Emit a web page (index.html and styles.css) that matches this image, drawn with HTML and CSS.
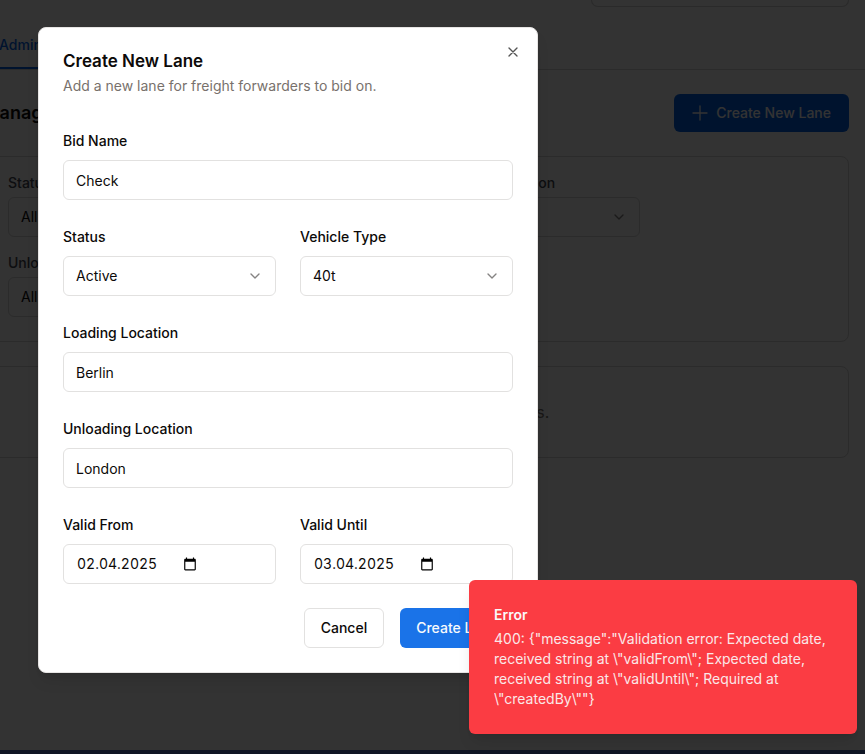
FILE: index.html
```html
<!DOCTYPE html>
<html lang="en">
<head>
<meta charset="utf-8">
<meta name="viewport" content="width=device-width, initial-scale=1">
<title>Manage Lanes</title>
<link rel="stylesheet" href="styles.css">
</head>
<body>
<div class="workspace">
  <main class="page">
    <div class="summary"></div>
    <nav class="tabs"><a class="tab" href="#admin">Admin</a></nav>
    <header class="page-head">
      <h1>Manage Lanes</h1>
      <button class="add" type="button">
        <svg width="16" height="16" viewBox="0 0 16 16" fill="none" stroke="currentColor" stroke-width="1.3" stroke-linecap="round"><path d="M8 1v14M1 8h14"/></svg>
        Create New Lane
      </button>
    </header>
    <section class="card filters">
      <div class="filter"><label for="f1">Status</label><div class="pick"><select id="f1"><option>All</option></select><svg class="chev" viewBox="0 0 24 24"><path d="m6 9 6 6 6-6"/></svg></div></div>
      <div class="filter"><label for="f2">Vehicle Type</label><div class="pick"><select id="f2"><option>All</option></select><svg class="chev" viewBox="0 0 24 24"><path d="m6 9 6 6 6-6"/></svg></div></div>
      <div class="filter"><label for="f3">Loading Location</label><div class="pick"><select id="f3"><option>All</option></select><svg class="chev" viewBox="0 0 24 24"><path d="m6 9 6 6 6-6"/></svg></div></div>
      <div class="filter"><label for="f4">Unloading Location</label><div class="pick"><select id="f4"><option>All</option></select><svg class="chev" viewBox="0 0 24 24"><path d="m6 9 6 6 6-6"/></svg></div></div>
    </section>
    <section class="card empty">No lanes match your current filters.</section>
  </main>
  <div class="overlay"></div>
</div>
<footer class="strip"></footer>

<div class="dialog" role="dialog" aria-labelledby="dialog-title">
  <button class="close" type="button" aria-label="Close"><svg width="16" height="16" viewBox="0 0 24 24" fill="none" stroke="currentColor" stroke-width="2" stroke-linecap="round"><path d="M18 6 6 18M6 6l12 12"/></svg></button>
  <div class="dialog-head">
    <h2 id="dialog-title">Create New Lane</h2>
    <p>Add a new lane for freight forwarders to bid on.</p>
  </div>
  <form class="form">
    <div class="field"><label for="name">Bid Name</label><input class="control" id="name" type="text" value="Check"></div>
    <div class="pair">
      <div class="field"><label for="status">Status</label><div class="pick"><select class="control" id="status"><option>Active</option></select><svg class="chev" viewBox="0 0 24 24"><path d="m6 9 6 6 6-6"/></svg></div></div>
      <div class="field"><label for="vehicle">Vehicle Type</label><div class="pick"><select class="control" id="vehicle"><option>40t</option></select><svg class="chev" viewBox="0 0 24 24"><path d="m6 9 6 6 6-6"/></svg></div></div>
    </div>
    <div class="field"><label for="loading">Loading Location</label><input class="control" id="loading" type="text" value="Berlin"></div>
    <div class="field"><label for="unloading">Unloading Location</label><input class="control" id="unloading" type="text" value="London"></div>
    <div class="pair">
      <div class="field"><label for="from">Valid From</label><div class="control date"><input id="from" type="text" value="02.04.2025"><svg width="14" height="14" viewBox="0 0 24 24"><path d="M20 3h-1V1h-2v2H7V1H5v2H4c-1.100 0-2 .9-2 2v16c0 1.100.9 2 2 2h16c1.100 0 2-.9 2-2V5c0-1.100-.9-2-2-2zm0 18H4V8h16v13z"/></svg></div></div>
      <div class="field"><label for="until">Valid Until</label><div class="control date"><input id="until" type="text" value="03.04.2025"><svg width="14" height="14" viewBox="0 0 24 24"><path d="M20 3h-1V1h-2v2H7V1H5v2H4c-1.100 0-2 .9-2 2v16c0 1.100.9 2 2 2h16c1.100 0 2-.9 2-2V5c0-1.100-.9-2-2-2zm0 18H4V8h16v13z"/></svg></div></div>
    </div>
    <div class="actions">
      <button class="btn outline" type="button">Cancel</button>
      <button class="btn primary" type="button">Create Lane</button>
    </div>
  </form>
</div>

<div class="toast" role="alert">
  <strong>Error</strong>
  <p>400: {"message":"Validation error: Expected date, received string at \"validFrom\"; Expected date, received string at \"validUntil\"; Required at \"createdBy\""}</p>
</div>
</body>
</html>
```
FILE: styles.css
```css
* { box-sizing: border-box; margin: 0; }

body {
  min-height: 100vh;
  display: flex;
  flex-direction: column;
  overflow: hidden;
  font: 14px/20px Inter, "Liberation Sans", sans-serif;
  color: #0c0a09;
}

button, input, select { font: inherit; color: inherit; }

.workspace { position: relative; flex: 1; background: #fcfcfc; }
.overlay { position: absolute; inset: 0; background: rgb(0 0 0 / 80%); }
.strip { height: 4px; background: #0f1524; }

/* The page is scrolled sideways, so its left edge is out of view. */
.page { margin-left: -17px; padding-right: 16px; }
.summary {
  width: 258px;
  height: 7px;
  margin-left: auto;
  border: 1px solid #d0d0d0;
  border-top: 0;
  border-radius: 0 0 8px 8px;
}
.tabs { display: flex; margin: 16px -16px 24px 0; border-bottom: 1px solid #d4d4d4; }
.tab {
  padding: 12px 16px;
  border-bottom: 2px solid #0062e6;
  color: #0062e6;
  font-weight: 500;
  text-decoration: none;
}
.page-head { display: flex; justify-content: space-between; align-items: center; }
h1 { font-size: 18px; line-height: 28px; font-weight: 600; }
.add {
  display: flex;
  align-items: center;
  gap: 8px;
  height: 38px;
  padding: 0 18px;
  border: 0;
  border-radius: 6px;
  background: #0062e6;
  color: #fff;
  font-weight: 500;
}
.card { margin-top: 24px; border: 1px solid #d8d8d8; border-radius: 8px; }
.filters { display: flex; flex-wrap: wrap; gap: 16px; padding: 16px 24px 24px; }
.filter { width: 200px; display: grid; gap: 4px; }
.filter label { font-weight: 500; color: #44474f; }
.empty { padding: 33px; text-align: center; font-size: 16px; line-height: 24px; color: #78716c; }

.pick { display: grid; align-items: center; }
.pick > * { grid-area: 1 / 1; }
.chev {
  justify-self: end;
  width: 16px;
  height: 16px;
  margin-right: 13px;
  fill: none;
  stroke: #858382;
  stroke-width: 2;
  stroke-linecap: round;
  stroke-linejoin: round;
  pointer-events: none;
}
.control, .filter select {
  appearance: none;
  width: 100%;
  height: 40px;
  padding: 0 12px;
  border: 1px solid #e2e1e0;
  border-radius: 6px;
  background: transparent;
}
.filter select { border-color: #d8d8d8; }

.dialog {
  position: absolute;
  top: 27px;
  left: 38px;
  width: 500px;
  padding: 24px;
  border: 1px solid #e7e5e4;
  border-radius: 8px;
  background: #fff;
  box-shadow: 0 10px 15px -3px rgb(0 0 0 / 10%), 0 4px 6px -4px rgb(0 0 0 / 10%);
}
.close {
  position: absolute;
  top: 16px;
  right: 16px;
  display: flex;
  padding: 0;
  border: 0;
  background: none;
  color: #555;
}
.dialog-head { display: grid; gap: 6px; margin-bottom: 32px; }
h2 { font-size: 17px; line-height: 18px; font-weight: 600; }
.dialog-head p { color: #78716c; }
.form, .field { display: grid; }
.form { gap: 24px; }
.field { gap: 6px; }
.field label { line-height: 26px; font-weight: 500; }
.pair { display: grid; grid-template-columns: 1fr 1fr; gap: 24px; }
.date { display: flex; align-items: center; padding: 0 13px; }
.date input {
  width: 106px;
  padding: 0;
  border: 0;
  background: none;
  font-variant-numeric: tabular-nums;
}
.actions { display: flex; justify-content: flex-end; gap: 16px; }
.btn { height: 40px; padding: 0 16px; border: 0; border-radius: 6px; font-weight: 500; }
.outline { border: 1px solid #e2e1e0; background: #fff; }
.primary { background: #1a73e8; color: #f8fafc; }

.toast {
  position: absolute;
  right: 8px;
  bottom: 20px;
  width: 388px;
  padding: 25px 24px 25px 25px;
  border-radius: 6px;
  background: #fb3c43;
  color: #fafafa;
  box-shadow: 0 10px 15px -3px rgb(0 0 0 / 10%), 0 4px 6px -4px rgb(0 0 0 / 10%);
}
.toast strong { display: block; margin-bottom: 4px; font-weight: 600; }
.toast p { opacity: .9; }
```
